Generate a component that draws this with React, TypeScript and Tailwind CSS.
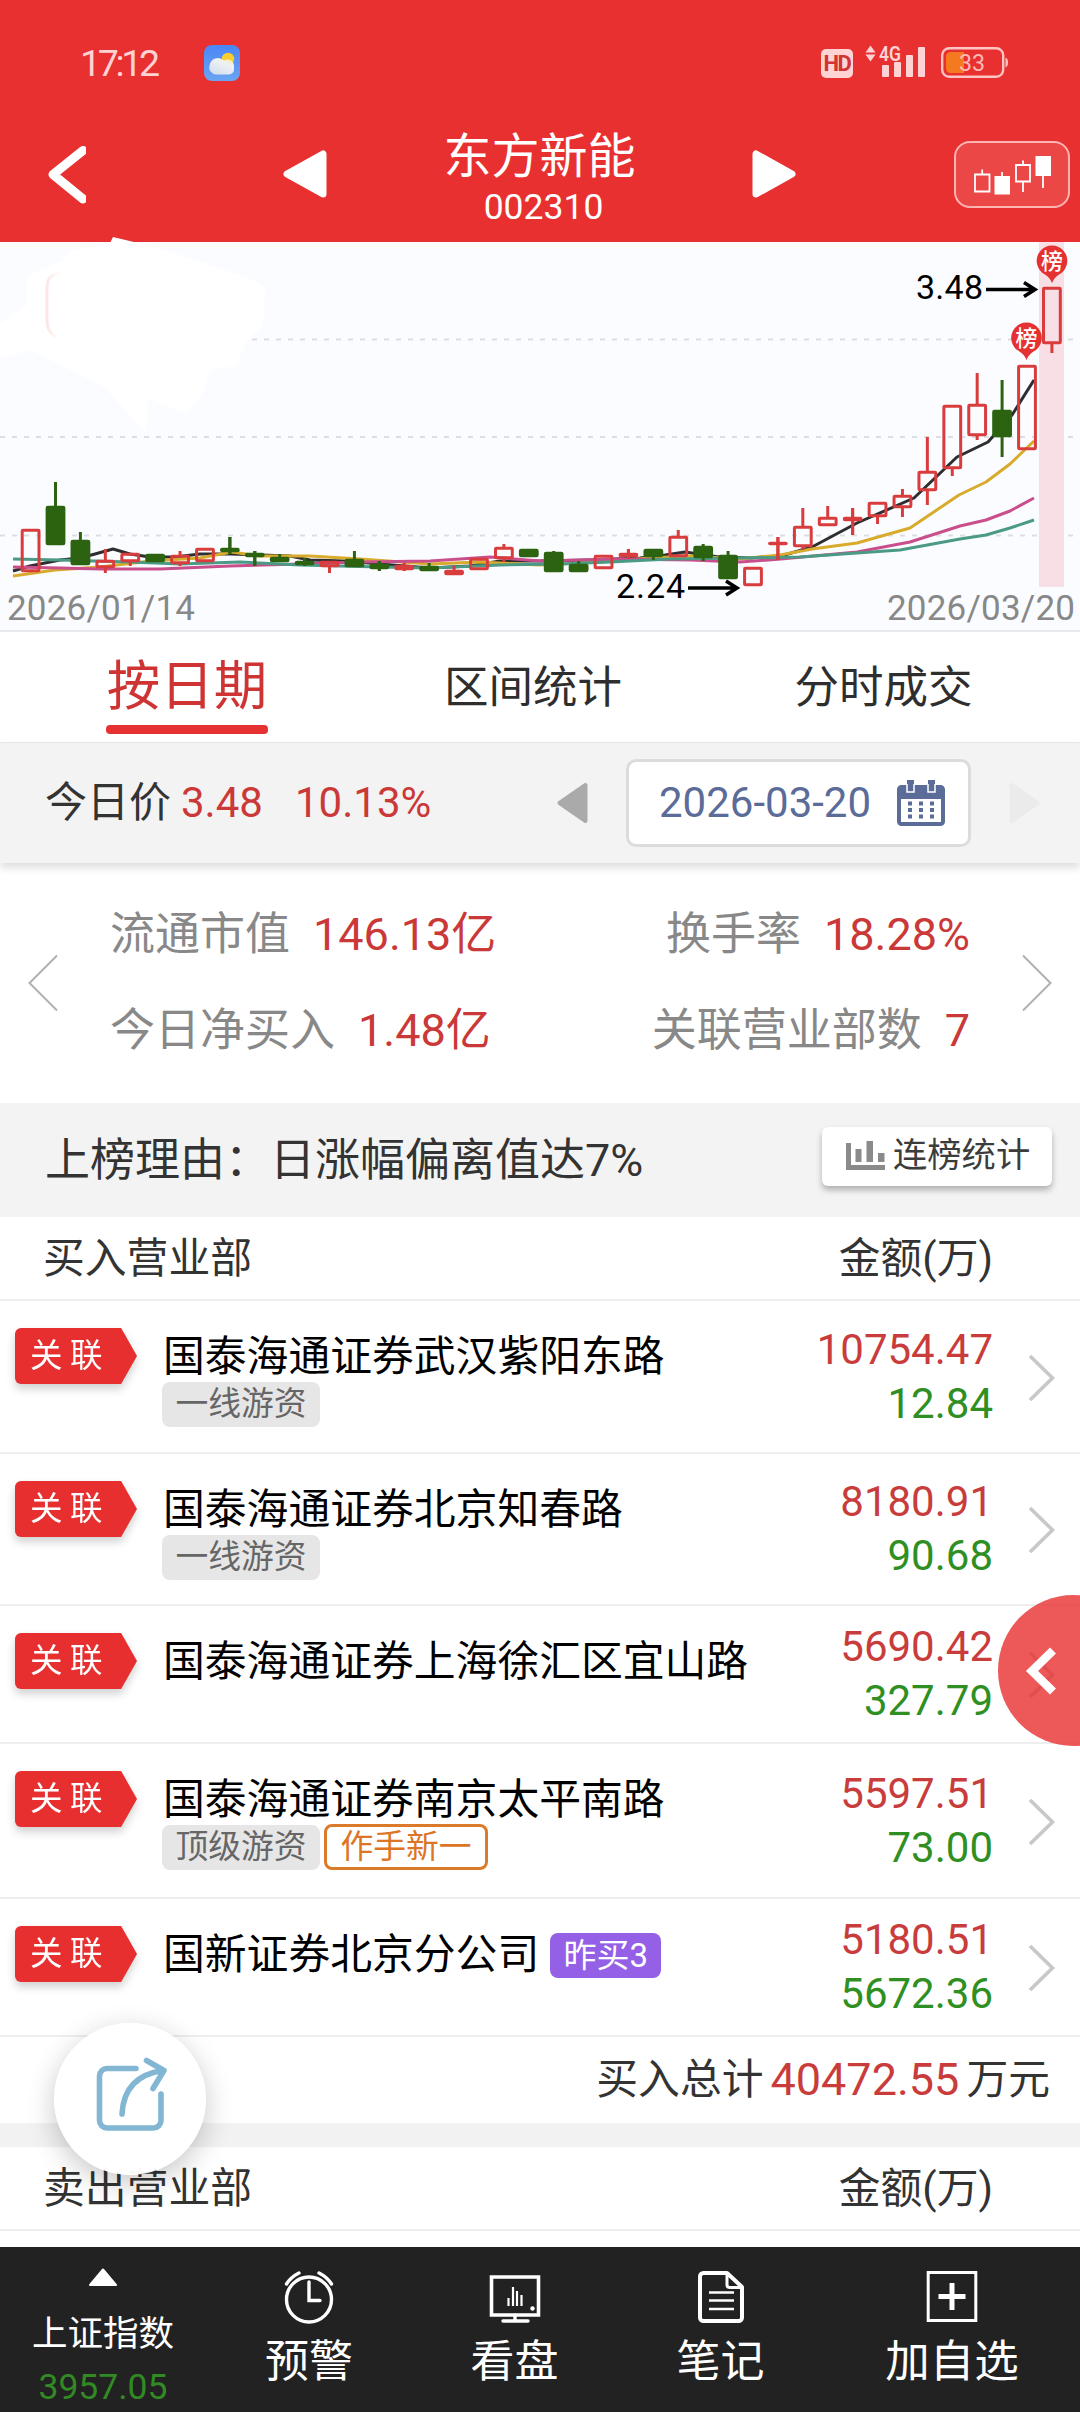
import React, { useState } from "react";

type Candle = {
  up: boolean;
  top: number;
  bottom: number;
  high?: number;
  low?: number;
};

type Badge = { text: string; kind: "gray" | "orange" };

type Dept = {
  name: string;
  buy: string;
  sell: string;
  height: string;
  badges?: Badge[];
  mark?: string;
};

// screen y of body and wick, oldest day first
const candles: Candle[] = [
  { up: true, top: 529, bottom: 572 },
  { up: false, top: 506, bottom: 545, high: 482 },
  { up: false, top: 540, bottom: 565, high: 532 },
  { up: true, top: 560, bottom: 568, high: 549, low: 573 },
  { up: true, top: 553, bottom: 562, low: 566 },
  { up: false, top: 554, bottom: 562 },
  { up: true, top: 555, bottom: 564, high: 551, low: 566 },
  { up: true, top: 548, bottom: 562 },
  { up: false, top: 548, bottom: 552, high: 537, low: 554 },
  { up: false, top: 553, bottom: 557, high: 551, low: 566 },
  { up: false, top: 557, bottom: 562, high: 554 },
  { up: false, top: 561, bottom: 565, high: 558, low: 566 },
  { up: true, top: 561, bottom: 567, low: 573 },
  { up: false, top: 559, bottom: 567, high: 551 },
  { up: false, top: 564, bottom: 569, high: 561, low: 571 },
  { up: true, top: 565, bottom: 570, high: 563, low: 571 },
  { up: false, top: 566, bottom: 571, high: 563 },
  { up: true, top: 570, bottom: 575, high: 566 },
  { up: true, top: 558, bottom: 570 },
  { up: true, top: 547, bottom: 559, high: 544, low: 562 },
  { up: false, top: 549, bottom: 557 },
  { up: false, top: 552, bottom: 572, high: 551 },
  { up: false, top: 564, bottom: 572, high: 561 },
  { up: true, top: 555, bottom: 569 },
  { up: true, top: 553, bottom: 557, high: 549, low: 559 },
  { up: false, top: 549, bottom: 557, low: 560 },
  { up: true, top: 536, bottom: 557, high: 530 },
  { up: false, top: 546, bottom: 558, high: 544, low: 561 },
  { up: false, top: 555, bottom: 579, high: 551 },
  { up: true, top: 567, bottom: 586 },
  { up: true, top: 542, bottom: 545, high: 537, low: 560 },
  { up: true, top: 526, bottom: 547, high: 508, low: 550 },
  { up: true, top: 517, bottom: 526, high: 506 },
  { up: true, top: 517, bottom: 521, high: 508, low: 535 },
  { up: true, top: 502, bottom: 517, low: 524 },
  { up: true, top: 495, bottom: 508, high: 489, low: 517 },
  { up: true, top: 471, bottom: 491, high: 437, low: 505 },
  { up: true, top: 405, bottom: 469, low: 476 },
  { up: true, top: 404, bottom: 436, high: 373, low: 440 },
  { up: false, top: 410, bottom: 437, high: 380, low: 457 },
  { up: true, top: 365, bottom: 450 },
  { up: true, top: 287, bottom: 344, low: 353 },
];

const averages = [
  {
    color: "#2e2e30",
    points:
      "13,571 30,566 60,560 80,558 95,554 113,549 130,554 150,557 175,557 200,554 230,554 260,555 290,556 310,560 345,561 380,564 430,568 470,566 500,561 540,561 590,560 640,558 665,555 685,552 719,557 750,558 781,556 812,547 857,523 914,498 957,457 988,442 1012,415 1034,380",
  },
  {
    color: "#d9ab2c",
    points:
      "13,576 55,570 100,567 150,561 200,558 232,552 260,556 310,556 360,559 430,564 480,562 540,565 600,562 650,558 690,556 740,559 780,555 812,549 857,543 910,528 959,495 986,482 1010,464 1034,441",
  },
  {
    color: "#c94f8c",
    points:
      "13,567 60,568 100,569 160,569 230,566 300,564 360,562 430,561 490,557 540,561 620,559 690,560 740,562 781,559 857,552 910,542 960,526 986,520 1010,511 1034,498",
  },
  {
    color: "#4a9a86",
    points:
      "13,559 60,560 130,562 180,564 240,562 300,565 380,567 430,568 500,565 560,564 610,562 670,559 740,558 800,557 857,553 900,550 960,539 986,535 1010,528 1034,520",
  },
];

const departments: Dept[] = [
  {
    name: "国泰海通证券武汉紫阳东路",
    buy: "10754.47",
    sell: "12.84",
    height: "h-[153px]",
    badges: [{ text: "一线游资", kind: "gray" }],
  },
  {
    name: "国泰海通证券北京知春路",
    buy: "8180.91",
    sell: "90.68",
    height: "h-[152px]",
    badges: [{ text: "一线游资", kind: "gray" }],
  },
  {
    name: "国泰海通证券上海徐汇区宜山路",
    buy: "5690.42",
    sell: "327.79",
    height: "h-[138px]",
  },
  {
    name: "国泰海通证券南京太平南路",
    buy: "5597.51",
    sell: "73.00",
    height: "h-[155px]",
    badges: [
      { text: "顶级游资", kind: "gray" },
      { text: "作手新一", kind: "orange" },
    ],
  },
  {
    name: "国新证券北京分公司",
    buy: "5180.51",
    sell: "5672.36",
    height: "h-[138px]",
    mark: "昨买3",
  },
];

const StatusBar: React.FC = () => (
  <div className="flex h-[106px] items-start pt-[44px] text-[#ffd3d3]">
    <span className="ml-[80px] w-[80px] text-[37.500px] leading-[38px] font-normal tracking-[-3.300px]">
      17:12
    </span>
    <svg className="mt-px ml-[44px]" width="36" height="36" viewBox="0 0 36 36">
      <defs>
        <linearGradient id="sky" x1="0" y1="0" x2="0" y2="1">
          <stop offset="0" stopColor="#4a86f7" />
          <stop offset="1" stopColor="#6ba4f3" />
        </linearGradient>
        <linearGradient id="cloud" x1="1" y1="0" x2="0.3" y2="1">
          <stop offset="0" stopColor="#fbe9a0" />
          <stop offset="0.4" stopColor="#eef1f3" />
          <stop offset="1" stopColor="#d5e0ee" />
        </linearGradient>
      </defs>
      <rect width="36" height="36" rx="8" fill="url(#sky)" />
      <circle cx="24" cy="14" r="6.2" fill="#fbce2d" />
      <path
        d="M12 29.500a7 7 0 0 1-6.500-9A8.500 8.500 0 0 1 20 15.500a6.500 6.500 0 0 1 10 4.500v4.500a5 5 0 0 1-5 5z"
        fill="url(#cloud)"
      />
    </svg>
    <div className="mt-[5px] ml-[581px] flex h-[29px] w-8 items-center justify-center rounded-[5px] bg-[#ffd3d3] text-[22px] leading-none font-bold tracking-[-1.500px] text-[#d03434]">
      HD
    </div>
    <svg className="ml-[12px] overflow-visible" width="62" height="44" viewBox="865 44 62 44">
      <path d="M865.500 52.500l5-7 5 7zM865.500 54.500l5 7 5-7z" fill="#ffd3d3" />
      <text
        x="879"
        y="60.500"
        fill="#ffd3d3"
        fontSize="20.500"
        fontWeight="600"
        textLength="22"
        lengthAdjust="spacingAndGlyphs"
      >
        4G
      </text>
      <g fill="#ffd3d3">
        <rect x="882" y="65" width="7" height="12" rx="1" />
        <rect x="894" y="62" width="7" height="15" rx="1" />
        <rect x="906" y="55" width="7" height="22" rx="1" />
        <rect x="918" y="47" width="7" height="30" rx="1" />
      </g>
    </svg>
    <svg className="ml-[13px]" width="70" height="36" viewBox="940 44 70 36">
      <rect x="942.200" y="48.200" width="61" height="28.600" rx="7" fill="none" stroke="#ffc4c4" strokeWidth="2.400" />
      <path d="M964 52h-13.500a4.500 4.500 0 0 0-4.500 4.500v12a4.500 4.500 0 0 0 4.500 4.500H964z" fill="#f57a1f" />
      <path d="M1005.500 57.500q2.500 1 2.500 5t-2.500 5z" fill="#ffc4c4" />
      <text x="959" y="71" fill="#ffb9b4" fontSize="24" textLength="26" lengthAdjust="spacingAndGlyphs">
        33
      </text>
    </svg>
  </div>
);

const TitleBar: React.FC = () => (
  <div className="flex h-[136px] items-start">
    <svg className="mt-[36px] ml-[44px]" width="42" height="66" viewBox="44 142 42 66">
      <path d="M83 150.500L53 174.500l30 24.500" fill="none" stroke="#fff" strokeWidth="9" strokeLinecap="round" strokeLinejoin="round" />
    </svg>
    <svg className="mt-[42px] ml-[196px]" width="48" height="52" viewBox="0 0 48 52">
      <path d="M5 26L41 6v40z" fill="#fff" stroke="#fff" strokeWidth="7" strokeLinejoin="round" />
    </svg>
    <div className="ml-[99px] flex w-[221px] flex-col items-center pt-[24px] text-white">
      <h1 className="text-[48px] leading-[54px] font-normal">东方新能</h1>
      <span className="ml-[8px] text-[35.500px] leading-[46px]">002310</span>
    </div>
    <svg className="mt-[42px] ml-[99px]" width="48" height="52" viewBox="0 0 48 52">
      <path d="M43 26L7 6v40z" fill="#fff" stroke="#fff" strokeWidth="7" strokeLinejoin="round" />
    </svg>
    <button className="mt-[35px] ml-[157px] flex h-[67px] w-[116px] items-center justify-center rounded-[16px] border-2 border-[#ffb4b4] bg-[#eb4747]">
      <svg width="80" height="40" viewBox="972 154 80 40">
        <g fill="none" stroke="#fff" strokeWidth="1.800">
          <path d="M975 173.500h14.500v17H975zM982.200 173.500v-5" />
          <path d="M1016 164h14v16.500h-14zM1023 164v-4.500M1023 180.500v10.500" />
          <path d="M1002 178v-7M1043 173v14" />
        </g>
        <path d="M994.500 175h15.500v18.500h-15.500zM1035.500 155h15.500v20h-15.500z" fill="#fff" />
      </svg>
    </button>
  </div>
);

const Pin: React.FC<{ x: number; y: number }> = ({ x, y }) => (
  <g>
    <path
      d={`M${x} ${y + 22}q-2-5.500-7-8.500A15.300 15.300 0 1 1 ${x + 7} ${y + 13.5}q-5 3-7 8.500z`}
      fill="#e53131"
    />
    <text x={x} y={y + 8} fill="#fff" fontSize="22" fontWeight="500" textAnchor="middle">
      榜
    </text>
  </g>
);

const KLine: React.FC = () => (
  <svg className="block overflow-visible bg-[#fbfcff]" width="1080" height="390" viewBox="0 242 1080 390">
    <defs>
      <linearGradient id="fade" x1="0" y1="0" x2="1" y2="0">
        <stop offset="0" stopColor="#f8cccc" stopOpacity="0.500" />
        <stop offset="1" stopColor="#fff" stopOpacity="0" />
      </linearGradient>
    </defs>
    <g stroke="#dcdde1" strokeWidth="1.800" strokeDasharray="5 7">
      <path d="M0 339.500H1073M0 437H1073M0 535.500H1073" />
    </g>
    <path d="M0 631H1080" stroke="#e8e8ee" strokeWidth="2" />
    <path
      d="M113 237L138 243 193 259 248 278 265 287 263 325 246 342 236 366 210 370 202 394 186 414 148 398 146 432 103 386 69 369 31 350 0 358V323L27 305V276L64 260 70 251 110 243z"
      fill="#fff"
    />
    <path d="M66 273.500H60q-13 0-13 16v28q0 16 9 19" fill="none" stroke="url(#fade)" strokeWidth="3" />
    <rect x="1039" y="242" width="25" height="345" fill="#f7dfe5" />
    {averages.map((a) => (
      <polyline key={a.color} points={a.points} fill="none" stroke={a.color} strokeWidth="3" strokeLinejoin="round" />
    ))}
    {candles.map((c, i) => {
      const x = 30.6 + i * 24.91;
      const color = c.up ? "#d93c3c" : "#2c6310";
      const thin = c.bottom - c.top < 6;
      return (
        <g key={i} stroke={color} strokeWidth="3">
          {c.high && <path d={`M${x} ${c.high}V${c.top + 1}`} />}
          {c.low && <path d={`M${x} ${c.bottom - 1}V${c.low}`} />}
          {thin && c.high && c.low && <path d={`M${x} ${c.high}V${c.low}`} />}
          <rect
            x={x - 8.4}
            y={c.top + 1.2}
            width="16.800"
            height={Math.max(c.bottom - c.top - 2.4, 0.6)}
            rx="0.800"
            fill={c.up && !thin ? "none" : color}
          />
        </g>
      );
    })}
    <Pin x={1052} y={261} />
    <Pin x={1026.5} y={338} />
    <g fill="#000" fontSize="34">
      <text x="916" y="299" textLength="67">3.48</text>
      <text x="616" y="598" textLength="69">2.24</text>
    </g>
    <g fill="none" stroke="#000" strokeWidth="3.600">
      <path d="M986 289.500H1034M1024 282.500l11 7-11 7" />
      <path d="M688 588H736M726 581l11 7-11 7" />
    </g>
    <g fill="#888" fontSize="35">
      <text x="7" y="620" textLength="188">2026/01/14</text>
      <text x="887" y="620" textLength="188">2026/03/20</text>
    </g>
  </svg>
);

const PriceBar: React.FC = () => (
  <div className="relative flex h-[120px] items-center bg-[#f3f3f3] shadow-[0_5px_8px_rgba(0,0,0,0.130)]">
    <span className="ml-[45px] w-[136px] text-[42px] leading-[60px] text-[#333]">今日价</span>
    <span className="w-[114px] text-[42px] leading-[60px] text-[#cb3838]">3.48</span>
    <span className="w-[262px] text-[42px] leading-[60px] text-[#cb3838]">10.13%</span>
    <svg width="31" height="42" viewBox="0 0 31 42">
      <path d="M2.500 21L28.500 3v36z" fill="#aaa" stroke="#aaa" strokeWidth="4" strokeLinejoin="round" />
    </svg>
    <div className="ml-[38px] flex h-[88px] w-[345px] items-center rounded-[10px] border-[3px] border-[#dcdcdc] bg-white">
      <span className="ml-[30px] w-[238px] text-[42px] leading-[60px] whitespace-nowrap text-[#5b6c98]">
        2026-03-20
      </span>
      <svg width="48" height="46" viewBox="0 0 48 46">
        <rect x="2" y="7" width="44" height="37" rx="2.500" fill="#fff" stroke="#5b6c98" strokeWidth="4" />
        <path d="M1 7h46v12H1z" fill="#5b6c98" />
        <path d="M10 0h7v12h-7zM31 0h7v12h-7z" fill="#5b6c98" stroke="#fff" strokeWidth="1.500" />
        <path d="M10 0h7v4h-7zM31 0h7v4h-7z" fill="#5b6c98" />
        <g stroke="#5b6c98" strokeWidth="4" strokeDasharray="4 7">
          <path d="M11 23.500h27M11 30h27M11 36.500h27" />
        </g>
      </svg>
    </div>
    <svg className="ml-[38px]" width="31" height="42" viewBox="0 0 31 42">
      <path d="M28.500 21L2.500 3v36z" fill="#ebebeb" stroke="#ebebeb" strokeWidth="4" strokeLinejoin="round" />
    </svg>
  </div>
);

const Stats: React.FC = () => (
  <div className="flex h-[240px] items-start bg-white text-[45px] leading-[96px] text-[#888]">
    <svg className="mt-[91px] ml-[27px]" width="32" height="58" viewBox="0 0 32 58">
      <path d="M30 1.500L2.500 29 30 56.500" fill="none" stroke="#b0b0b0" strokeWidth="2" />
    </svg>
    <div className="ml-[51px] pt-[24px]">
      <p>
        流通市值<span className="ml-[23px] text-[#cb3838]">146.13亿</span>
      </p>
      <p>
        今日净买入<span className="ml-[23px] text-[#cb3838]">1.48亿</span>
      </p>
    </div>
    <div className="ml-auto pt-[24px] text-right">
      <p>
        换手率<span className="ml-[23px] text-[#cb3838]">18.28%</span>
      </p>
      <p>
        关联营业部数<span className="ml-[23px] text-[#cb3838]">7</span>
      </p>
    </div>
    <svg className="mt-[91px] mr-[27px] ml-[51px]" width="32" height="58" viewBox="0 0 32 58">
      <path d="M2 1.500L29.500 29 2 56.500" fill="none" stroke="#b0b0b0" strokeWidth="2" />
    </svg>
  </div>
);

const ReasonBar: React.FC = () => (
  <div className="flex h-[114px] items-start bg-[#f3f3f3]">
    <p className="ml-[45px] pt-[30px] text-[45px] leading-[56px] text-[#333]">
      上榜理由：日涨幅偏离值达7%
    </p>
    <button className="mt-[24px] mr-[28px] ml-auto flex h-[59px] w-[230px] items-start rounded-[6px] bg-white pl-[24px] shadow-[0_4px_6px_rgba(0,0,0,0.280)]">
      <svg className="mt-[14px]" width="39" height="29" viewBox="0 0 39 29">
        <path d="M0 2h5v22h34v5H0zM9.500 8h6v13h-6zM20.500 0h6.500v21h-6.500zM32 12h6.500v9H32z" fill="#8a8a8a" />
      </svg>
      <span className="mt-[3px] ml-[8px] text-[34.300px] leading-[50px] text-[#3c3c3c]">连榜统计</span>
    </button>
  </div>
);

const TableHead: React.FC<{ title: string }> = ({ title }) => (
  <div className="flex h-[84px] items-center justify-between border-b-2 border-[#eeeeee] bg-white pt-[2px] pr-[87px] pl-[43px] text-[41.800px] leading-[50px] text-[#333]">
    <span>{title}</span>
    <span>金额(万)</span>
  </div>
);

const DeptRow: React.FC<{ dept: Dept }> = ({ dept }) => (
  <div className={`flex border-b-2 border-[#eeeeee] bg-white ${dept.height}`}>
    <div className="mt-[27px] ml-[15px] h-[56px] w-[122px] drop-shadow-[0_5px_4px_rgba(0,0,0,0.180)]">
      <div className="flex h-full w-full items-center rounded-l-[6px] bg-[#e72f2f] pl-[15px] text-[32.500px] leading-[50px] tracking-[7.500px] whitespace-nowrap text-white [clip-path:polygon(0_0,87%_0,100%_50%,87%_100%,0_100%)]">
        关联
      </div>
    </div>
    <div className="ml-[25px] pt-[31px]">
      <div className="flex h-[50px] items-center pl-px text-[41.800px] leading-[50px] text-black">
        {dept.name}
        {dept.mark && (
          <span className="ml-[11px] flex h-[45px] w-[111px] items-center justify-center rounded-[8px] bg-[#9360e6] text-[33px] leading-[45px] text-white">
            {dept.mark}
          </span>
        )}
      </div>
      <div className="flex gap-[4px]">
        {dept.badges?.map((b) =>
          b.kind === "gray" ? (
            <span
              key={b.text}
              className="flex h-[45px] w-[158px] items-center justify-center rounded-[8px] bg-[#e6e6e6] text-[32.800px] leading-[45px] text-[#666]"
            >
              {b.text}
            </span>
          ) : (
            <span
              key={b.text}
              className="-mt-px flex h-[46px] w-[164px] items-center justify-center rounded-[8px] border-[3px] border-[#dc7a2c] bg-white text-[32.800px] leading-[45px] text-[#dc7626]"
            >
              {b.text}
            </span>
          )
        )}
      </div>
    </div>
    <div className="ml-auto flex flex-col justify-center text-right text-[42px] leading-[54px]">
      <span className="text-[#c93c3c]">{dept.buy}</span>
      <span className="text-[#2f8f22]">{dept.sell}</span>
    </div>
    <svg className="mr-[24px] ml-[35px] self-center" width="28" height="48" viewBox="0 0 28 48">
      <path d="M2 3l22.500 22L2 47" fill="none" stroke="#c8c8c8" strokeWidth="3.600" />
    </svg>
  </div>
);

const BottomNav: React.FC = () => (
  <nav className="absolute inset-x-0 bottom-0 flex h-[165px] bg-[#222] text-white">
    <div className="flex w-[206px] flex-col items-center pt-[20px]">
      <svg width="30" height="20" viewBox="0 0 30 20">
        <path d="M15 2.500L28 18H2z" fill="#fff" stroke="#fff" strokeWidth="2" strokeLinejoin="round" />
      </svg>
      <span className="mt-[24px] text-[35.500px] leading-[46px]">上证指数</span>
      <span className="mt-[8px] text-[35.500px] leading-[44px] text-[#318a24]">3957.05</span>
    </div>
    <div className="flex w-[206px] flex-col items-center pt-[22px]">
      <svg width="52" height="56" viewBox="0 0 52 56">
        <g fill="none" stroke="#fff" strokeWidth="3.400" strokeLinecap="round">
          <circle cx="26" cy="30.500" r="22.500" />
          <path d="M26 13v18.500h11M3.500 15Q8 8 16 4M48.500 15Q44 8 36 4" />
        </g>
      </svg>
      <span className="mt-[9px] text-[44px] leading-[56px]">预警</span>
    </div>
    <div className="flex w-[205px] flex-col items-center pt-[22px]">
      <svg width="52" height="56" viewBox="0 0 52 56">
        <path d="M2.500 8h47v38h-47z" fill="none" stroke="#fff" strokeWidth="3.600" />
        <path d="M26 46v6M14 52h25" stroke="#fff" strokeWidth="3.400" strokeLinecap="round" />
        <path d="M19.500 29v8M24 18v19M28 22v15M32.500 26v11" stroke="#fff" strokeWidth="2.200" />
        <circle cx="43.500" cy="39.500" r="2.200" fill="#fff" />
      </svg>
      <span className="mt-[9px] text-[44px] leading-[56px]">看盘</span>
    </div>
    <div className="flex w-[207px] flex-col items-center pt-[22px]">
      <svg width="52" height="56" viewBox="0 0 52 56">
        <g fill="none" stroke="#fff" strokeLinejoin="round">
          <path d="M32 4H8.500a3.500 3.500 0 0 0-3.500 3.500v41A3.500 3.500 0 0 0 8.500 52h35a3.500 3.500 0 0 0 3.500-3.500V18z" strokeWidth="4" />
          <path d="M32 4v12q0 2.500 3 2.500h12" strokeWidth="3" />
          <path d="M14 23.500h25M14 31.500h25M14 40h25" strokeWidth="2.600" />
        </g>
      </svg>
      <span className="mt-[9px] text-[44px] leading-[56px]">笔记</span>
    </div>
    <div className="flex flex-1 flex-col items-center pt-[22px]">
      <svg width="52" height="56" viewBox="0 0 52 56">
        <path d="M2.200 3.500h47.600v48H2.200z" fill="none" stroke="#fff" strokeWidth="3" />
        <path d="M26 14v27M12.500 27.500h27" stroke="#fff" strokeWidth="5" />
      </svg>
      <span className="mt-[9px] text-[44.500px] leading-[56px]">加自选</span>
    </div>
  </nav>
);

const tabs = [
  { label: "按日期", width: "w-[348px]" },
  { label: "区间统计", width: "w-[344px]" },
  { label: "分时成交", width: "w-[357px]" },
];

const App: React.FC = () => {
  const [tab, setTab] = useState<number>(0);

  return (
    <div className="relative h-[2412px] w-[1080px] overflow-hidden bg-white font-['Roboto','Noto_Sans_CJK_SC',sans-serif]">
      <header className="h-[242px] bg-[#e83030]">
        <StatusBar />
        <TitleBar />
      </header>
      <KLine />

      <div className="flex h-[111px] border-b border-[#e8e8e8] bg-white pl-[13px]">
        {tabs.map((t, i) => (
          <button
            key={t.label}
            onClick={() => setTab(i)}
            className={`flex flex-col items-center pt-[22px] ${t.width}`}
          >
            <span
              className={
                i === tab
                  ? "text-[53.500px] leading-[66px] text-[#cf3434]"
                  : "pt-px text-[44.500px] leading-[66px] text-[#2e2e2e]"
              }
            >
              {t.label}
            </span>
            {i === tab && <span className="mt-[5px] h-[9px] w-[162px] rounded-[4px] bg-[#e53131]" />}
          </button>
        ))}
      </div>

      <PriceBar />
      <Stats />
      <ReasonBar />

      <TableHead title="买入营业部" />
      {departments.map((d) => (
        <DeptRow key={d.name} dept={d} />
      ))}
      <div className="flex h-[86px] items-center justify-end bg-white pr-[30px] text-[41.800px] leading-[60px] text-[#333]">
        买入总计
        <span className="mx-[7px] text-[45px] text-[#c93c3c]">40472.55</span>
        万元
      </div>
      <div className="h-6 bg-[#f2f2f2]" />
      <TableHead title="卖出营业部" />

      {/* drawer handle */}
      <button className="absolute top-[1595px] left-[998px] h-[151px] w-[151px] rounded-full bg-[#e82f2f]/80">
        <svg className="ml-[26px]" width="34" height="48" viewBox="0 0 34 48">
          <path d="M29 3.500L8 24l21 20.500" fill="none" stroke="#fff" strokeWidth="8.500" />
        </svg>
      </button>

      {/* share */}
      <button className="absolute top-[2023px] left-[54px] flex h-[152px] w-[152px] items-center justify-center rounded-full bg-white/97 shadow-[0_8px_28px_rgba(0,0,0,0.220)]">
        <svg width="72" height="76" viewBox="94 2061 72 76" className="overflow-visible">
          <g fill="none" stroke="#82b6d3" strokeWidth="5.600" strokeLinecap="round" strokeLinejoin="round">
            <path d="M136 2068.500h-29a7.500 7.500 0 0 0-7.500 7.500v44.500a7.500 7.500 0 0 0 7.500 7.500h46.500a7.500 7.500 0 0 0 7.500-7.500V2094" />
            <path d="M122 2114Q124 2076 163 2070.500M146.500 2060.500l17.500 10-11 18" />
          </g>
        </svg>
      </button>

      <BottomNav />
    </div>
  );
};

export default App;
